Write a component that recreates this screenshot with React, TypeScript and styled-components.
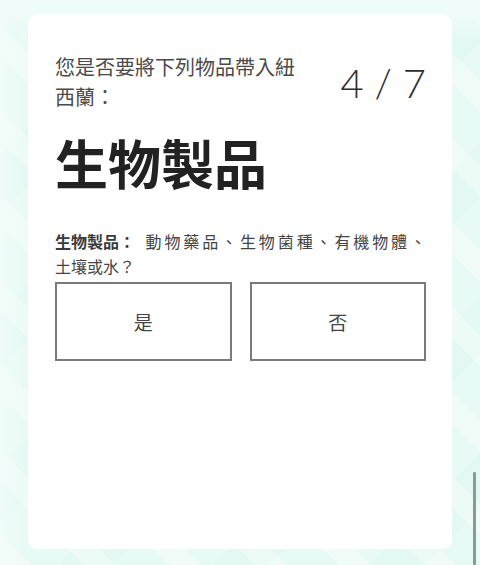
import React from "react";
import styled, { createGlobalStyle } from "styled-components";

const GlobalStyle = createGlobalStyle`
  html, body {
    margin: 0;
    padding: 0;
    height: 565px;
    overflow: hidden;
  }
  body {
    background-color: #e8faf5;
    background-image:
      linear-gradient(180deg, #f0fcf9 0px, #f0fcf9 14px, rgba(240,252,249,0) 40px),
      linear-gradient(90deg, rgba(242,253,250,0.8) 0px, rgba(242,253,250,0) 28px),
      repeating-linear-gradient(45deg, rgba(255,255,255,0.35) 0px, rgba(255,255,255,0.35) 22px, rgba(255,255,255,0) 22px, rgba(255,255,255,0) 60px),
      repeating-linear-gradient(135deg, rgba(218,246,238,0.35) 0px, rgba(218,246,238,0.35) 40px, rgba(218,246,238,0) 40px, rgba(218,246,238,0) 110px);
    font-family: "Noto Sans CJK TC", "Noto Sans", sans-serif;
  }
`;

const Page = styled.div`
  position: relative;
  height: 565px;
  box-sizing: border-box;
  padding: 14px 28px 16px 28px;
`;

const Card = styled.main`
  height: 535px;
  box-sizing: border-box;
  background: #ffffff;
  border-radius: 9px;
  padding: 38px 26px 0 27px;
  display: flex;
  flex-direction: column;
`;

const Header = styled.div`
  display: flex;
  align-items: center;
  justify-content: space-between;
`;

const Question = styled.p`
  margin: 0;
  width: 250px;
  font-size: 20px;
  line-height: 30px;
  color: #4a4a4a;
  font-weight: 400;
`;

const Counter = styled.div`
  font-family: Lato, "Open Sans", sans-serif;
  font-weight: 300;
  font-size: 40px;
  line-height: 1;
  color: #2e2e2e;
  white-space: pre;
  padding-top: 2px;
`;

const Title = styled.h1`
  margin: 18px 0 0 0;
  font-size: 53px;
  line-height: 65px;
  font-weight: 700;
  color: #222222;
`;

const Description = styled.p`
  margin: 34px 0 0 0;
  font-size: 16px;
  line-height: 25px;
  color: #444444;
  word-break: keep-all;
  text-align: justify;
`;

const Strong = styled.strong`
  display: inline-block;
  font-weight: 700;
  color: #3a3a3a;
  padding-right: 4px;
`;

const Buttons = styled.div`
  margin-top: 3px;
  display: grid;
  grid-template-columns: 1fr 1fr;
  gap: 18px;
`;

const Choice = styled.button`
  height: 79px;
  box-sizing: border-box;
  background: #ffffff;
  border: 2px solid #7a7a7a;
  border-radius: 0;
  font-family: "Noto Sans CJK TC", sans-serif;
  font-size: 19px;
  color: #454545;
  cursor: pointer;
  padding: 0;
`;

const ScrollThumb = styled.div`
  position: absolute;
  right: 4px;
  top: 472px;
  width: 3px;
  height: 93px;
  background: #8c9996;
  border-radius: 1px;
`;

export default function App() {
  return (
    <>
      <GlobalStyle />
      <Page>
        <Card>
          <Header>
            <Question>您是否要將下列物品帶入紐西蘭：</Question>
            <Counter>4 / 7</Counter>
          </Header>
          <Title>生物製品</Title>
          <Description>
            <Strong>生物製品：</Strong> 動物藥品、生物菌種、有機物體、土壤或水？
          </Description>
          <Buttons>
            <Choice>是</Choice>
            <Choice>否</Choice>
          </Buttons>
        </Card>
        <ScrollThumb />
      </Page>
    </>
  );
}
